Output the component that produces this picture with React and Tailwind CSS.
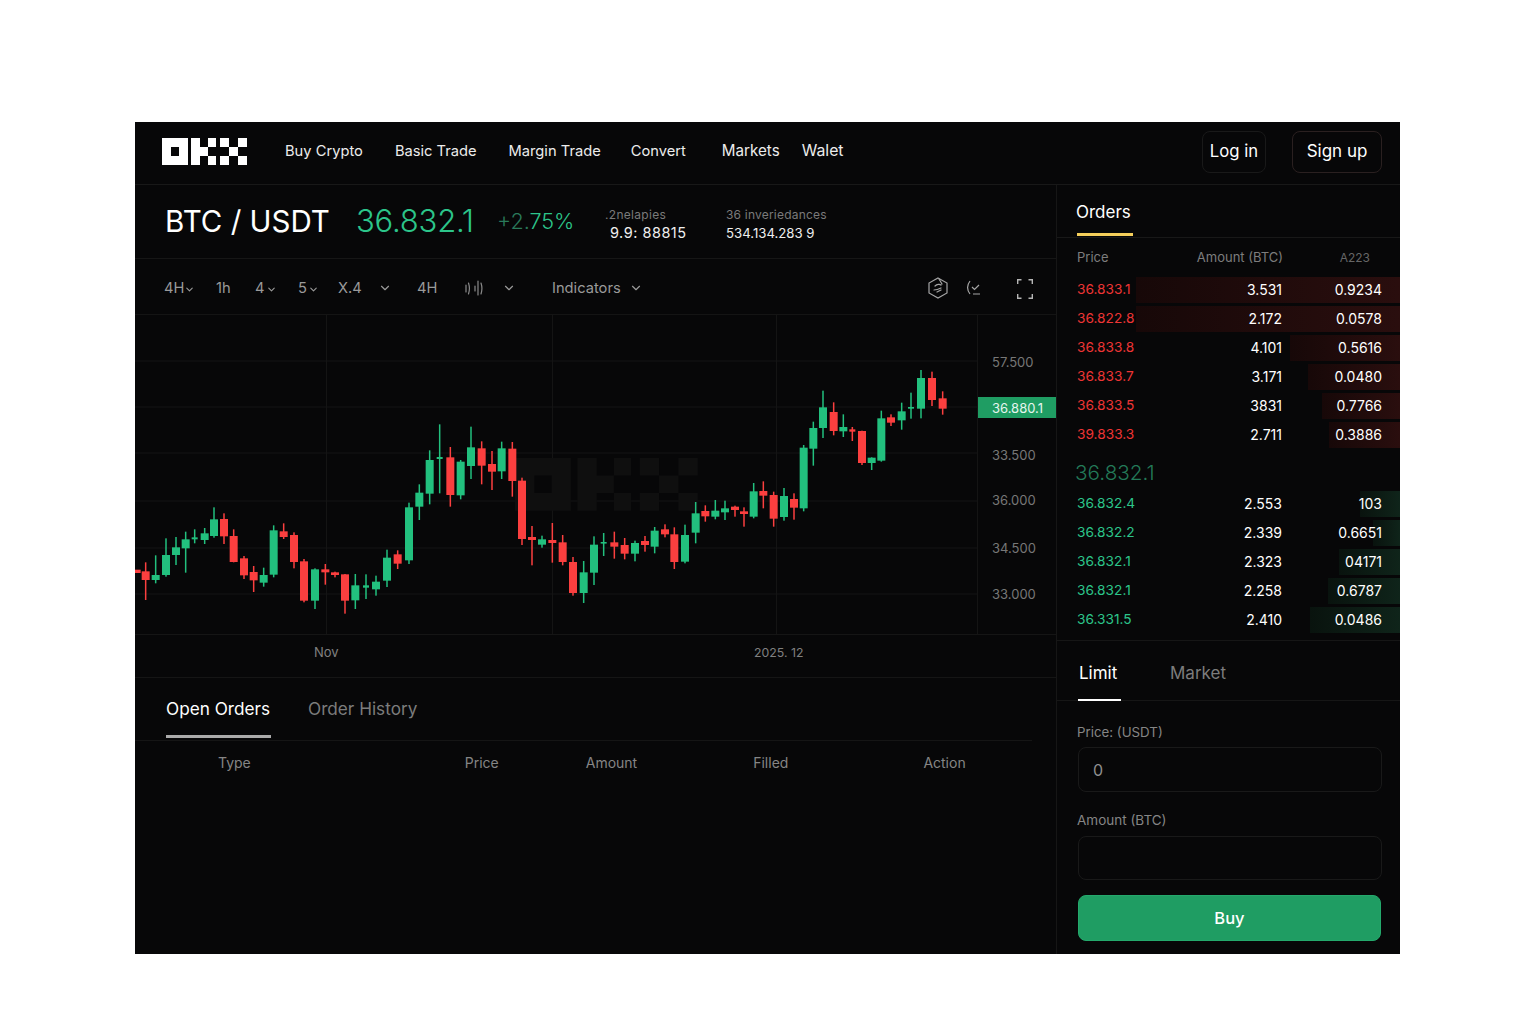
import React from "react";
import { ChevronDown } from "lucide-react";

// candles as read off the reference: [x, wickTop, wickBottom, bodyTop, bodyBottom, color]
// each block is in its own 3x crop, toPage() turns them into page coordinates
const blockA = [
  [5, 509, 509, 509, 519, "r"], [32, 487, 600, 514, 540, "r"], [62, 466, 550, 525, 540, "g"],
  [93, 415, 530, 465, 525, "g"], [123, 411, 495, 442, 465, "g"], [152, 395, 518, 418, 445, "g"],
  [179, 388, 430, 412, 418, "g"], [209, 384, 432, 400, 420, "g"], [237, 322, 413, 358, 408, "g"],
  [267, 340, 432, 357, 409, "r"], [296, 388, 487, 408, 486, "r"], [327, 468, 537, 475, 526, "r"],
  [356, 498, 576, 516, 541, "r"], [386, 503, 560, 525, 548, "g"], [416, 376, 532, 391, 524, "g"],
  [446, 370, 417, 394, 411, "r"], [477, 397, 505, 405, 486, "r"], [507, 477, 607, 484, 602, "r"],
  [540, 505, 627, 508, 602, "g"], [571, 492, 554, 508, 517, "r"], [600, 515, 532, 517, 525, "r"],
  [630, 522, 641, 523, 602, "r"], [661, 522, 627, 556, 601, "g"], [693, 523, 597, 556, 563, "g"],
  [723, 527, 587, 545, 568, "g"], [756, 449, 561, 473, 542, "g"], [788, 451, 507, 463, 491, "r"],
  [822, 308, 492, 322, 481, "g"], [853, 253, 360, 278, 320, "g"], [884, 151, 313, 180, 281, "g"],
];
const blockB = [
  [59, 73, 280, 171, 177, "g"], [91, 141, 320, 172, 285, "r"], [122, 180, 298, 185, 286, "g"],
  [153, 80, 237, 142, 198, "g"], [185, 124, 253, 145, 197, "r"], [216, 153, 270, 192, 215, "r"],
  [245, 125, 237, 145, 214, "g"], [277, 126, 290, 146, 243, "r"], [306, 233, 435, 242, 417, "r"],
  [336, 378, 496, 411, 420, "r"], [366, 407, 443, 418, 434, "g"], [397, 369, 488, 420, 429, "r"],
  [428, 405, 496, 427, 486, "r"], [459, 471, 587, 486, 579, "r"], [491, 483, 609, 517, 579, "g"],
  [522, 409, 555, 434, 518, "g"], [551, 399, 468, 426, 430, "g"], [583, 395, 476, 427, 440, "r"],
  [614, 414, 478, 435, 461, "r"], [645, 422, 484, 429, 461, "g"], [675, 408, 455, 423, 435, "r"],
  [704, 381, 460, 392, 440, "g"], [735, 373, 412, 388, 403, "r"], [763, 382, 507, 403, 486, "r"],
  [795, 374, 490, 405, 485, "g"], [827, 306, 430, 340, 398, "g"], [856, 316, 365, 333, 349, "r"],
  [886, 300, 358, 332, 350, "g"],
];
const blockC = [
  [135, 452, 510, 475, 487, "g"], [165, 467, 500, 470, 480, "r"], [192, 472, 530, 484, 492, "r"],
  [221, 399, 505, 424, 500, "g"], [250, 394, 475, 423, 437, "r"], [281, 425, 530, 435, 506, "r"],
  [312, 414, 512, 438, 501, "g"], [342, 430, 509, 447, 473, "r"], [371, 285, 484, 293, 475, "g"],
  [400, 215, 347, 234, 296, "g"], [429, 122, 264, 172, 234, "g"], [461, 157, 256, 186, 243, "r"],
  [490, 193, 261, 231, 244, "g"], [517, 231, 273, 238, 245, "r"], [546, 242, 345, 243, 339, "r"],
  [575, 322, 360, 323, 339, "g"], [604, 182, 335, 205, 332, "g"], [633, 193, 228, 202, 218, "r"],
  [665, 158, 239, 184, 211, "g"], [693, 128, 206, 171, 176, "g"], [723, 60, 205, 84, 176, "g"],
  [756, 65, 168, 84, 150, "r"], [788, 124, 194, 145, 176, "r"],
];

const toPage = (rows, ox, oy) =>
  rows.map(([x, wt, wb, bt, bb, c]) => ({
    x: ox + x / 3,
    wickTop: oy + wt / 3,
    wickBottom: oy + wb / 3,
    top: oy + bt / 3,
    h: Math.max((bb - bt) / 3, 1.6),
    up: c === "g",
    // the thin dojis are narrower than a full body
    w: bb - bt < 8 ? 6 : 8,
  }));

const candles = [
  ...toPage(blockA, 135, 400),
  ...toPage(blockB, 420, 400),
  ...toPage(blockC, 680, 350),
];

const asks = [
  { price: "36.833.1", amount: "3.531", total: "0.9234", bar: "w-[264px]" },
  { price: "36.822.8", amount: "2.172", total: "0.0578", bar: "w-[264px]" },
  { price: "36.833.8", amount: "4.101", total: "0.5616", bar: "w-[110px]" },
  { price: "36.833.7", amount: "3.171", total: "0.0480", bar: "w-[92px]" },
  { price: "36.833.5", amount: "3831", total: "0.7766", bar: "w-[78px]" },
  { price: "39.833.3", amount: "2.711", total: "0.3886", bar: "w-[71px]" },
];

const bids = [
  { price: "36.832.4", amount: "2.553", total: "103", bar: "w-[40px]" },
  { price: "36.832.2", amount: "2.339", total: "0.6651", bar: "w-[27px]" },
  { price: "36.832.1", amount: "2.323", total: "04171", bar: "w-[61px]" },
  { price: "36.832.1", amount: "2.258", total: "0.6787", bar: "w-[72px]" },
  { price: "36.331.5", amount: "2.410", total: "0.0486", bar: "w-[90px]" },
];

const axisLabels = [
  { label: "57.500", pos: "top-[38px]" },
  { label: "33.500", pos: "top-[131px]" },
  { label: "36.000", pos: "top-[176px]" },
  { label: "34.500", pos: "top-[224px]" },
  { label: "33.000", pos: "top-[270px]" },
];

const Logo = () => (
  <svg width="85" height="27" viewBox="0 0 85 27" fill="#fff" className="shrink-0 mb-[2px]">
    <path d="M0 0h26v27H0zM9 9v9h8V9z" fillRule="evenodd" />
    <path d="M29 0h9v27h-9zM38 9h8v9h-8zM46 0h8v9h-8zM46 18h8v9h-8z" />
    <path d="M58 0h9v9h-9zM58 18h9v9h-9zM67 9h9v9h-9zM76 0h9v9h-9zM76 18h9v9h-9z" />
  </svg>
);

const Row = ({ row, side }) => (
  <div className="relative h-[26px] flex items-center pl-[20px] pr-[18px] text-sm">
    <div
      className={`absolute right-0 top-0 bottom-0 ${row.bar} ${
        side === "ask"
          ? "bg-gradient-to-r from-[#170808] to-[#2a0e0e]"
          : "bg-gradient-to-r from-[#09130e] to-[#0f241a]"
      }`}
    />
    <span className={`relative w-[80px] text-[13.7px] ${side === "ask" ? "text-[#ee3535]" : "text-[#2cc58a]"}`}>{row.price}</span>
    <span className="relative w-[125px] text-right text-white">{row.amount}</span>
    <span className="relative flex-1 text-right text-white">{row.total}</span>
  </div>
);

const Chart = () => (
  <div className="relative h-[320px] border-b border-[#151515]">
    <svg width="921" height="319" viewBox="135 315 921 319" className="block">
      {[361, 407, 453, 501, 548, 594].map((y) => (
        <line key={y} x1="135" x2="977" y1={y} y2={y} stroke="#141414" />
      ))}
      {[326.5, 552.5, 776.5, 977.5].map((x) => (
        <line key={x} x1={x} x2={x} y1="315" y2="634" stroke="#141414" />
      ))}
      {/* faint logo behind the candles */}
      <g fill="#0f0f0f" transform="translate(515 458) scale(2.15 1.95)">
        <path d="M0 0h26v27H0zM9 9v9h8V9z" fillRule="evenodd" />
        <path d="M29 0h9v27h-9zM38 9h8v9h-8zM46 0h8v9h-8zM46 18h8v9h-8z" />
        <path d="M58 0h9v9h-9zM58 18h9v9h-9zM67 9h9v9h-9zM76 0h9v9h-9zM76 18h9v9h-9z" />
      </g>
      {candles.map((c, i) => (
        <g key={i} fill={c.up ? "#22c07e" : "#fb3f3f"}>
          {c.wickBottom > c.wickTop && (
            <rect x={c.x - 0.75} y={c.wickTop} width="1.5" height={c.wickBottom - c.wickTop} />
          )}
          <rect x={c.x - c.w / 2} y={c.top} width={c.w} height={c.h} />
        </g>
      ))}
    </svg>
    {axisLabels.map((a) => (
      <span key={a.label} className={`absolute left-[857px] ${a.pos} text-[13px] leading-[18px] text-[#777]`}>
        {a.label}
      </span>
    ))}
    <span className="absolute left-[843px] top-[82px] w-[78px] h-[21px] bg-[#1f9d63] pl-[14px] text-[13px] leading-[22px] text-[#e6f5ee]">
      36.880.1
    </span>
  </div>
);

export default function App() {
  return (
    <div className="min-h-screen bg-white pt-[122px] pl-[135px] font-['Inter',sans-serif]">
      <div className="w-[1265px] h-[832px] bg-[#070708] flex flex-col overflow-hidden">
        {/* top bar */}
        <header className="h-[63px] shrink-0 flex items-center border-b border-[#181818] pl-[27px] pr-[18px] pb-[2px] text-[14.7px] text-[#ececec]">
          <Logo />
          <a className="ml-[38px] mb-[2px]">Buy Crypto</a>
          <a className="ml-[32px] mb-[2px]">Basic Trade</a>
          <a className="ml-[32px] mb-[2px]">Margin Trade</a>
          <a className="ml-[30px] mb-[2px]">Convert</a>
          <a className="ml-[36px] mb-[2px] text-[15.2px]">Markets</a>
          <a className="ml-[22px] mb-[2px] text-[15.8px]">Walet</a>
          <button className="ml-auto w-[64px] h-[42px] rounded-lg border border-[#191919] text-[16.7px] text-white">Log in</button>
          <button className="ml-[26px] w-[90px] h-[42px] rounded-lg border border-[#2a2020] text-[17px] text-white">Sign up</button>
        </header>

        <div className="flex-1 flex min-h-0">
          {/* left column */}
          <section className="w-[922px] shrink-0 border-r border-[#161616] flex flex-col">
            <div className="h-[74px] shrink-0 flex items-center border-b border-[#161616] pl-[30px]">
              <h1 className="text-[29.5px] text-white w-[191px] whitespace-nowrap">BTC / USDT</h1>
              <span className="text-[31px] font-light text-[#2cc58a] w-[141px] tracking-[-0.2px]">36.832.1</span>
              <span className="text-[21.6px] font-light w-[108px] text-[#2cc58a]">
                <span className="text-[#2a7a5b]">+2.</span>75%
              </span>
              <div className="w-[121px] flex flex-col pt-[7px]">
                <span className="text-xs text-[#7a7a7a] tracking-[0.3px]">.2nelapies</span>
                <span className="pl-[5px] text-[14.5px] tracking-[0.5px] text-[#efefef] leading-[20px]">9.9: 88815</span>
              </div>
              <div className="flex flex-col pt-[7px]">
                <span className="text-xs text-[#7a7a7a] tracking-[0.2px]">36 inveriedances</span>
                <span className="text-[13.2px] text-[#efefef] leading-[20px]">534.134.283 9</span>
              </div>
            </div>

            <div className="h-[56px] shrink-0 flex items-center border-b border-[#141414] pl-[29px] pt-[3px] text-[14.7px] text-[#9a9a9a]">
              <span className="w-[52px] flex items-center">4H<ChevronDown size={11} strokeWidth={2.4} className="mt-[3px]" /></span>
              <span className="w-[39px]">1h</span>
              <span className="w-[43px] flex items-center">4<ChevronDown size={11} strokeWidth={2.4} className="mt-[3px] ml-[1px]" /></span>
              <span className="w-[40px] flex items-center">5<ChevronDown size={11} strokeWidth={2.4} className="mt-[3px] ml-[1px]" /></span>
              <span className="w-[40px]">X.4</span>
              <ChevronDown size={14} className="mr-[25px]" />
              <span className="w-[48px]">4H</span>
              <svg width="18" height="18" viewBox="0 0 18 18" fill="none" stroke="#8a8a8a" strokeWidth="1.2" strokeLinecap="round">
                <path d="M1 6v7M3.5 4c1 3 1 8 0 11M10 7v5M13 2v14M16 4c1 3 1 8 0 11" />
              </svg>
              <ChevronDown size={14} className="ml-[19px]" />
              <span className="ml-[36px]">Indicators</span>
              <ChevronDown size={14} className="ml-[8px]" />
              <svg width="22" height="24" viewBox="0 0 22 24" fill="none" stroke="#a5a5a5" strokeWidth="1.2" strokeLinecap="round" className="ml-[284px]">
                <path d="M11 2l9 5v10l-9 5-9-5V7z" />
                <path d="M8 10c2-2 5-2 6-1M7 14c3 0 5-1 7-2M10 16l4-2M12 3l3 5" />
              </svg>
              <svg width="16" height="18" viewBox="0 0 16 18" fill="none" stroke="#a5a5a5" strokeWidth="1.2" className="ml-[17px]">
                <path d="M4 2C1 6 1 11 4 15M6 8l2.5 2.5L13 6M7 15h7" />
              </svg>
              <svg width="16" height="20" viewBox="0 0 16 20" fill="none" stroke="#b5b5b5" strokeWidth="1.4" className="ml-[35px] mt-[2px]">
                <path d="M0.7 5V0.7H4.5M11.5 0.7h3.8V5M0.7 15v4.3H4.5M11.5 19.3h3.8V15" />
              </svg>
            </div>

            <Chart />

            <div className="h-[43px] shrink-0 relative border-b border-[#151515] text-[13px] text-[#808080]">
              <span className="absolute left-[179px] top-[8px]">Nov</span>
              <span className="absolute left-[619px] top-[9px] text-[12.3px]">2025. 12</span>
            </div>

            <div className="h-[63px] shrink-0 mr-[24px] flex items-stretch gap-[37px] border-b border-[#151515] pl-[31px] text-[17.2px]">
              <span className="relative flex items-center text-white w-[105px] whitespace-nowrap">
                Open Orders
                <span className="absolute left-0 right-0 bottom-[2px] h-[3px] bg-[#aaa]" />
              </span>
              <span className="flex items-center text-[#7c7c7c]">Order History</span>
            </div>

            <div className="flex h-[43px] items-center text-sm text-[#858585]">
              <span className="ml-[83px]">Type</span>
              <span className="ml-[214px]">Price</span>
              <span className="ml-[87px]">Amount</span>
              <span className="ml-[116px]">Filled</span>
              <span className="ml-[135px]">Action</span>
            </div>
          </section>

          {/* right column */}
          <aside className="flex-1 flex flex-col min-w-0">
            <div className="h-[53px] shrink-0 border-b border-[#181818] flex items-stretch pl-[19px]">
              <span className="relative flex items-center pt-[4px] text-[17px] text-white">
                Orders
                <span className="absolute left-[1px] -right-[2px] bottom-[1px] h-[3px] bg-[#f5cf5b]" />
              </span>
            </div>
            <div className="h-[39px] shrink-0 flex items-center pl-[20px] text-[13px] text-[#7d7d7d]">
              <span className="w-[80px]">Price</span>
              <span className="w-[126px] text-right">Amount (BTC)</span>
              <span className="w-[87px] text-right text-xs text-[#666]">A223</span>
            </div>
            <div className="flex flex-col gap-[3px]">
              {asks.map((r) => <Row key={r.price} row={r} side="ask" />)}
            </div>
            <div className="h-[43px] shrink-0 flex items-center pl-[18px] pt-[6px] text-[20.7px] font-light text-[#237a58]">36.832.1</div>
            <div className="flex flex-col gap-[3px]">
              {bids.map((r, i) => <Row key={i} row={r} side="bid" />)}
            </div>

            <div className="mt-[7px] h-[61px] shrink-0 border-t border-[#161616] flex items-stretch border-b pl-[22px] text-[17px]">
              <span className="relative flex items-center text-white w-[91px] pt-[6px]">
                Limit
                <span className="absolute left-[-1px] w-[43px] -bottom-px h-[2px] bg-white" />
              </span>
              <span className="flex items-center text-[#7c7c7c] pt-[6px]">Market</span>
            </div>

            <div className="pl-[21px] pr-[18px] pt-[21px] flex flex-col">
              <label className="-ml-px text-[13.3px] leading-[20px] text-[#858585]">Price: (USDT)</label>
              <div className="mt-[5px] h-[45px] rounded-lg border border-[#191919] flex items-center pl-[14px] text-base text-[#8f8f8f]">0</div>
              <label className="-ml-px mt-[18px] text-[13.5px] leading-[20px] text-[#858585]">Amount (BTC)</label>
              <div className="mt-[6px] h-[44px] rounded-lg border border-[#191919]" />
              <button className="mt-[15px] mr-px h-[46px] rounded-lg bg-[#1f9d63] border border-[#24a96c] text-[16.5px] font-medium text-white">Buy</button>
            </div>
          </aside>
        </div>
      </div>
    </div>
  );
}
